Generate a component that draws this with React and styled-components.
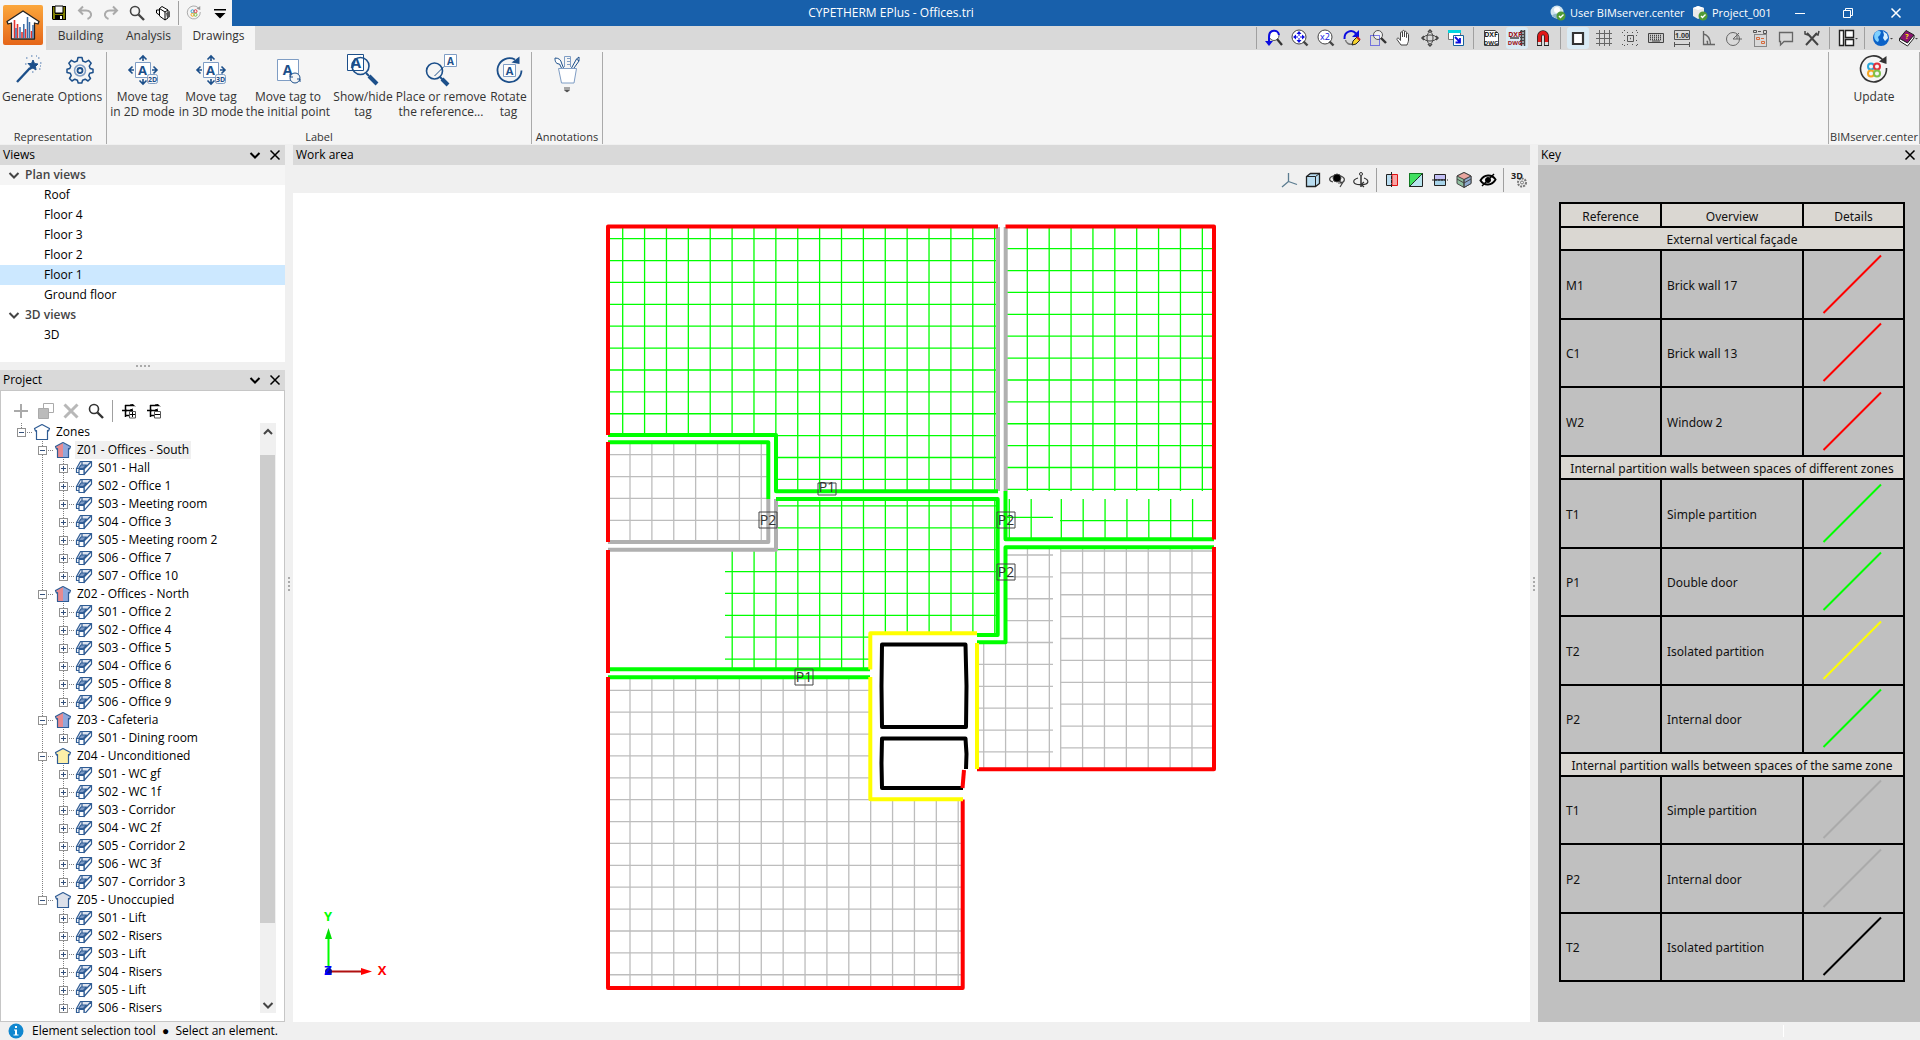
import React from 'react'
import styled, { createGlobalStyle } from 'styled-components'

const GlobalStyle = createGlobalStyle`
  * { box-sizing: border-box; }
  body {
    margin: 0;
    font-family: "Open Sans", "Noto Sans", sans-serif;
    font-size: 12px;
    line-height: 16px;
    color: #000;
    background: #f0f0f0;
  }
  button { font: inherit; color: inherit; }
  svg { display: block; flex: none; overflow: visible; }
  ul { list-style: none; margin: 0; padding: 0; }
`

/* ---------- layout ---------- */

const Page = styled.div`
  display: flex;
  flex-direction: column;
  height: 100vh;
  overflow: hidden;
`
const TopArea = styled.header`
  display: grid;
  grid-template-columns: 46px 1fr;
  flex: none;
`
const LogoBox = styled.div`
  display: flex;
  align-items: center;
  justify-content: center;
  background: #f5f5f5;
`
const TitleBar = styled.div`
  display: flex;
  height: 26px;
  background: #1860ab;
  color: #fff;
`
const QuickAccess = styled.div`
  display: flex;
  align-items: center;
  gap: 4px;
  width: 186px;
  padding-left: 2px;
  background: #f5f5f5;
`
const Title = styled.h1`
  flex: 1;
  margin: 0;
  text-align: center;
  font-size: 12px;
  font-weight: 400;
  line-height: 26px;
`
const Account = styled.div`
  display: flex;
  align-items: center;
  gap: 4px;
  width: 226px;
  font-size: 11px;
  white-space: nowrap;
`
const AccountLink = styled.a`
  display: flex;
  align-items: center;
  gap: 4px;
  width: ${p => p.$w}px;
  color: #fff;
  text-decoration: none;
`
const WindowButton = styled.button`
  display: flex;
  align-items: center;
  justify-content: center;
  width: 48px;
  border: none;
  padding: 0;
  background: none;
`
const TabRow = styled.div`
  display: flex;
  justify-content: space-between;
  height: 24px;
  background: #d9d9d9;
`
const Tabs = styled.nav`
  display: flex;
`
const Tab = styled.button`
  width: ${p => p.$w}px;
  border: none;
  padding: 0 0 4px;
  color: #333;
  background: ${p => (p.$active ? '#f5f5f5' : 'transparent')};
`
const Tools = styled.div`
  display: flex;
  align-items: center;
  gap: 4px;
  padding-right: 1px;
`
const IconButton = styled.button`
  display: flex;
  align-items: center;
  justify-content: center;
  width: 22px;
  height: 22px;
  padding: 0;
  border: none;
  border-radius: 3px;
  background: ${p => (p.$active ? '#d9ebf5' : 'transparent')};
`
const Divider = styled.span`
  align-self: stretch;
  width: 1px;
  margin: 1px ${p => p.$gap || 0}px;
  background: #a0a0a0;
`

/* ---------- ribbon ---------- */

const Ribbon = styled.div`
  display: flex;
  flex: none;
  height: 94px;
  padding-top: 2px;
  background: #f5f5f5;
  color: #333;
`
const Group = styled.section`
  display: flex;
  flex-direction: column;
  justify-content: space-between;
  padding: 0 1px;
  border-right: 1px solid #aaa;
  ${p => p.$last && 'margin-left: auto; border-left: 1px solid #aaa;'}
`
const GroupButtons = styled.div`
  display: flex;
  justify-content: center;
`
const GroupName = styled.div`
  text-align: center;
  font-size: 11px;
  line-height: 14px;
`
const BigButton = styled.button`
  display: flex;
  flex-direction: column;
  align-items: center;
  justify-content: flex-start;
  gap: 3px;
  width: ${p => p.$w}px;
  padding: 2px 0 0;
  border: none;
  background: none;
  line-height: 15px;
  white-space: nowrap;
`

/* ---------- panels ---------- */

const Main = styled.main`
  display: flex;
  flex: 1;
  min-height: 0;
  padding-top: 1px;
`
const LeftColumn = styled.aside`
  display: flex;
  flex-direction: column;
  width: 285px;
`
const PanelHead = styled.div`
  display: flex;
  align-items: center;
  flex: none;
  height: 20px;
  padding-left: 3px;
  background: #d9d9d9;
`
const PanelTitle = styled.h2`
  flex: 1;
  margin: 0;
  font-size: 12px;
  font-weight: 400;
`
const HeadButton = styled.button`
  display: flex;
  justify-content: center;
  width: 20px;
  padding: 0;
  border: none;
  background: none;
`
const ViewList = styled.ul`
  flex: none;
  height: 197px;
  background: #fff;
`
const ViewRow = styled.li`
  display: flex;
  align-items: center;
  gap: 5px;
  height: 20px;
  padding-left: ${p => (p.$group ? 8 : 44)}px;
  font-weight: ${p => (p.$group ? 600 : 400)};
  color: ${p => (p.$group ? '#444' : '#000')};
  background: ${p => (p.$selected ? '#cce8ff' : p.$tint ? '#f5f5f5' : 'transparent')};
`
const SplitBar = styled.div`
  display: flex;
  flex-direction: ${p => (p.$vertical ? 'column' : 'row')};
  align-items: center;
  justify-content: center;
  gap: 2px;
  flex: none;
  ${p => (p.$vertical ? 'width' : 'height')}: 8px;
`
const Dot = styled.i`
  width: 2px;
  height: 2px;
  background: #aaa;
`
const ProjectBody = styled.div`
  display: flex;
  flex-direction: column;
  flex: 1;
  min-height: 0;
  padding: 8px 8px 8px 0;
  border: 1px solid #c6c6c6;
  background: #fff;
`
const ProjectTools = styled.div`
  display: flex;
  align-items: center;
  gap: 3px;
  height: 24px;
  flex: none;
  padding-left: 9px;
`
const TreeArea = styled.div`
  display: flex;
  flex: 1;
  min-height: 0;
`
const Tree = styled.ul`
  flex: 1;
  overflow: hidden;
`
const TreeRow = styled.li`
  display: flex;
  align-items: center;
  height: 18px;
  padding-left: 16px;
`
const dotted = 'repeating-linear-gradient(#808080 0 1px, transparent 1px 2px)'
const Guide = styled.span`
  flex: none;
  width: 21px;
  height: 18px;
  background: ${p => (p.$on ? dotted + ' 4px 0 / 1px 100% no-repeat' : 'none')};
`
const ExpandCell = styled.span`
  display: flex;
  align-items: center;
  width: 9px;
  height: 18px;
  background: ${dotted} 4px 0 / 1px ${p => (p.$end ? '50%' : '100%')} no-repeat;
`
const Expander = styled.button`
  width: 9px;
  height: 9px;
  padding: 0;
  border: 1px solid #919191;
  background: #fff;
`
const Stub = styled.span`
  width: 7px;
  height: 1px;
  margin-right: 1px;
  background: repeating-linear-gradient(90deg, transparent 0 1px, #808080 1px 2px);
`
const TreeLabel = styled.span`
  margin-left: 4px;
  padding: 0 2px;
  line-height: 18px;
  background: ${p => (p.$selected ? '#f0f0f0' : 'transparent')};
`
const Scrollbar = styled.div`
  display: flex;
  flex-direction: column;
  justify-content: space-between;
  width: 16px;
  background: #f0f0f0;
`
const ScrollThumb = styled.div`
  height: 468px;
  margin-bottom: auto;
  margin-right: 1px;
  background: #cdcdcd;
`
const ScrollButton = styled.button`
  display: flex;
  align-items: center;
  justify-content: center;
  height: ${p => (p.$tall ? 32 : 16)}px;
  padding: 0 0 ${p => (p.$tall ? 14 : 0)}px;
  border: none;
  background: none;
`
const WorkArea = styled.section`
  display: flex;
  flex-direction: column;
  flex: 1;
  min-width: 0;
`
const WorkTools = styled.div`
  display: flex;
  align-items: center;
  justify-content: flex-end;
  gap: 2px;
  flex: none;
  height: 28px;
  padding-top: 2px;
`
const Canvas = styled.div`
  flex: 1;
  min-height: 0;
  background: #fff;
  svg { width: 100%; height: 100%; }
`
const KeyPanel = styled.aside`
  display: flex;
  flex-direction: column;
  width: 382px;
  background: #c0c0c0;
`
const KeyBody = styled.div`
  padding: 37px 15px 0 21px;
`
const KeyTable = styled.table`
  width: 100%;
  table-layout: fixed;
  border-collapse: collapse;
  font-family: "Noto Sans", sans-serif;
  font-size: 12px;
  line-height: 18px;
  color: #111;
  th, td {
    border: 2px solid #000;
    padding: 2px 5px 0;
    font-weight: 400;
    text-align: left;
  }
  thead th, th[colspan] {
    padding: 3px 0 0;
    background: #dad7d2;
    text-align: center;
    white-space: nowrap;
  }
  thead tr { height: 24px; }
  tbody tr:nth-child(even) { height: 69px; }
  tbody tr:nth-child(odd) { height: 68px; }
  td svg { margin: 0 auto; }
  td:last-child { padding: 0 4px 2px 0; }
`
const KeySection = styled.tr`
  &&& { height: 23px; }
`
const StatusBar = styled.footer`
  display: flex;
  align-items: center;
  gap: 8px;
  flex: none;
  height: 18px;
  padding: 0 136px 0 8px;
`
const StatusMark = styled.i`
  width: 1px;
  height: 12px;
  margin-left: auto;
  background: #fff;
`

/* ---------- icons ---------- */

const NAVY = '#1c4f8a'
const LIGHT = '#7f9dc4'

const Svg = ({ s = 18, w, h, children, ...rest }) => (
  <svg width={w || s} height={h || s} viewBox={`0 0 ${w || s} ${h || s}`} fill="none" stroke="#333" {...rest}>
    {children}
  </svg>
)
const letter = { stroke: 'none', fontFamily: 'Open Sans', fontWeight: 700, textAnchor: 'middle' }

const Logo = () => (
  <svg width="40" height="40" viewBox="0 0 40 40">
    <defs>
      <linearGradient id="orange" x1="0" y1="0" x2="0" y2="1">
        <stop offset="0" stopColor="#fba73c" />
        <stop offset="1" stopColor="#e5661a" />
      </linearGradient>
    </defs>
    <rect width="40" height="40" rx="2" fill="url(#orange)" />
    <path d="M20 6L36 16.500L35 19L31.500 18V34H8.500V18L5 19L4 16.500Z" fill="#fff" stroke="#222" strokeWidth="1.300" strokeLinejoin="round" />
    <path d="M11.500 15V33M14.500 19V33M19 27V33M22.500 24V33M28.500 26V33" stroke="#e3342f" strokeWidth="1.600" />
    <path d="M17 22V33M20.800 19V33M24.500 12V33M26.500 17V33M13 23V33M30 20V33" stroke="#3c6ea8" strokeWidth="1.500" />
  </svg>
)

const Save = () => (
  <Svg s={16} stroke="none">
    <path d="M1 1H15V15H2L1 14Z" fill="#000" />
    <path d="M2 2H4V9H12V2H14V14H2Z" fill="#808000" />
    <path d="M4 1H12V8H4Z" fill="#f5f5f5" stroke="#000" />
    <path d="M4 10H12V15H4Z" fill="#000" />
    <path d="M9 11H11V14H9Z" fill="#fff" />
  </Svg>
)
const Undo = ({ flip }) => (
  <Svg s={16} stroke="#aaa" strokeWidth="2" transform={flip ? 'scale(-1 1)' : undefined}>
    <path d="M6 1.500L2 5.500L6 9.500M2.500 5.500H9C13 5.500 14.500 8 14 10.500C13.500 12.500 12 13.500 10.500 14" />
  </Svg>
)
const Search = ({ c = '#444' }) => (
  <Svg s={16} stroke={c}>
    <circle cx="6" cy="6" r="4.500" strokeWidth="1.600" />
    <path d="M9.500 9.500L15 15" strokeWidth="2.400" />
  </Svg>
)
const Teapot = () => (
  <Svg s={16} stroke="#000">
    <path d="M4.500 3.500L7 1.500L13 5V13L10 15L4.500 11Z" fill="#fff" />
    <path d="M4.500 3.500L10 7L13 5M10 7V15M4.500 5H1.500V8L4.500 10" />
    <path d="M11 8L15 6V12L12 13Z" fill="#555" stroke="none" />
  </Svg>
)
const Bim = ({ s = 16, dark = '#999' }) => (
  <svg width={s} height={s} viewBox="0 0 32 32" fill="none">
    <path d="M25 6A13 13 0 1 0 28.500 14" stroke={dark} strokeWidth="1.600" />
    <path d="M28.500 2V10L21 7.500Z" fill={dark} />
    <g strokeWidth="2">
      <circle cx="13" cy="12.500" r="3" stroke="#29a8dc" />
      <circle cx="19" cy="12.500" r="3" stroke="#e0303c" />
      <circle cx="13" cy="19.500" r="3" stroke="#f5a623" />
      <circle cx="19" cy="19.500" r="3" stroke="#7cc04b" />
    </g>
  </svg>
)
const MoreArrow = () => (
  <Svg s={14} stroke="none" fill="#000">
    <path d="M1 3H13V4.500H1ZM1.500 7H12.500L7 12.500Z" />
  </Svg>
)
const UserIcon = ({ cube }) => (
  <Svg s={16} stroke="none">
    {cube ? <path d="M6 1L12 3V11L6 14L1 11V3Z" fill="#e9e9e9" />
      : <g><circle cx="7" cy="7" r="6.500" fill="#cfe4ee" /><circle cx="7" cy="5" r="3" fill="#fff" /><path d="M2 11C3 8 11 8 12 11L7 14Z" fill="#8fb7c9" /></g>}
    {cube && <path d="M1 3L6 5L12 3L6 1Z" fill="#fff" />}
    <circle cx="11" cy="11" r="4.500" fill="#4f9a35" />
    <path d="M9 11L10.500 12.500L13.500 9.500" stroke="#fff" strokeWidth="1.400" />
  </Svg>
)
const Chevron = ({ c = '#000', up }) => (
  <Svg w={12} h={12} stroke={c} strokeWidth="2">
    <path d={up ? 'M2 8L6 4L10 8' : 'M1.500 4L6 8.500L10.500 4'} />
  </Svg>
)
const Cross = ({ c = '#000' }) => (
  <Svg s={12} stroke={c} strokeWidth="1.500"><path d="M1.500 1.500L10.500 10.500M10.500 1.500L1.500 10.500" /></Svg>
)

const Lens = ({ children }) => (
  <Svg s={18}>
    <circle cx="8" cy="8" r="7" fill="#fff" stroke="#444" />
    <path d="M12.500 12.500L16.500 16.500" stroke="#444" strokeWidth="2.400" />
    {children}
  </Svg>
)
const BLUE = '#0c0ce0'
const ZoomPrev = () => (
  <Svg s={18}>
    <circle cx="9" cy="6.500" r="5" fill="#fff" stroke="#555" />
    <path d="M12 10L17 16" strokeWidth="2.200" />
    <path d="M14 6C13 0 4 0 4 8V13" stroke={BLUE} strokeWidth="2" />
    <path d="M0 12H8L4 17Z" fill={BLUE} stroke="none" />
  </Svg>
)
const ZoomAll = () => (
  <Lens>
    <path d="M8 3V13M3 8H13" stroke={BLUE} strokeDasharray="4 2" />
    <path d="M5.500 5L8 2L10.500 5ZM5.500 11L8 14L10.500 11ZM5 5.500L2 8L5 10.500ZM11 5.500L14 8L11 10.500Z" fill={BLUE} stroke="none" />
  </Lens>
)
const ZoomTwo = () => <Lens><text x="8" y="11" {...letter} fontWeight="400" fontSize="9" fill={BLUE}>x2</text></Lens>
const Redraw = () => (
  <Svg s={18}>
    <path d="M2.500 11C3 14 6 16 10 15" stroke="#777" strokeWidth="1.500" />
    <path d="M1.500 10C1 2 9 0 13 4.500" stroke={BLUE} strokeWidth="2" />
    <path d="M16 1V8H9Z" fill={BLUE} stroke="none" />
    <path d="M9 16L10 12L14 8L17 11L13 15Z" fill="#f6d32d" stroke="#222" />
    <path d="M14 8L17 11" stroke="#c01c28" strokeWidth="2" />
  </Svg>
)
const ZoomWindow = () => (
  <Svg s={18}>
    <circle cx="9" cy="6" r="4.500" fill="#f0f0f0" stroke="#555" />
    <path d="M12 9L17 14" strokeWidth="2.400" />
    <path d="M1.500 6.500H10.500V16.500H1.500Z" stroke={BLUE} strokeDasharray="1 1" />
  </Svg>
)
const Hand = () => (
  <Svg s={18} stroke="#444">
    <path d="M6 16L2 10.500C1.500 9 3.500 8.500 4.500 10L5.500 11.500V4C5.500 2.500 7.500 2.500 7.500 4V8V2.500C7.500 1 9.500 1 9.500 2.500V8V3C9.500 2 11.500 2 11.500 3.500V8.500V5C11.500 4 13.500 4 13.500 5.500V11C13.500 13 12.500 14 12 16Z" fill="#fff" />
  </Svg>
)
const Orbit = () => (
  <Svg s={18} stroke="#444">
    <ellipse cx="9" cy="9" rx="3" ry="6" /><ellipse cx="9" cy="9" rx="6.500" ry="3" />
    <path d="M7 3L9 1L11 3M7 15L9 17L11 15M3 7L1 9L3 11M15 7L17 9L15 11" strokeWidth="1.500" />
  </Svg>
)
const WindowPair = () => (
  <Svg s={18}>
    <path d="M1.500 1.500H13.500V10.500H1.500Z" fill="#fff" stroke="#777" />
    <path d="M1 1H14V4H1Z" fill="#00d5e0" stroke="none" />
    <path d="M6.500 6.500H16.500V16.500H6.500Z" fill="#fff" stroke="#16609c" />
    <path d="M8 8L13 13M13 9V13.500H8.500" stroke={BLUE} strokeWidth="1.800" />
  </Svg>
)
const Dxf = ({ red }) => (
  <Svg s={18}>
    {!red && <path d="M2.500 1.500H13L16.500 4.500V16.500H2.500Z" fill="#fff" stroke="#444" />}
    {red && <path d="M12 2.500H17M12 5.500H17M12 8.500H17M12 11.500H17M12 14.500H17M13.500 1V17M16.500 1V17M2 9H11" stroke="#444" strokeWidth="1.500" />}
    <text x={red ? 7 : 9} y="8" {...letter} fontSize="7" fill={red ? '#9c0f14' : '#222'}>DXF</text>
    <text x={red ? 7 : 9} y="16" {...letter} fontSize="6" fill={red ? '#9c0f14' : '#222'}>DWG</text>
  </Svg>
)
const Magnet = () => (
  <Svg s={18}>
    <path d="M5.500 17V7.500C5.500 2.500 12.500 2.500 12.500 7.500V17" stroke="#222" strokeWidth="5" />
    <path d="M5.500 13V7.500C5.500 2.500 12.500 2.500 12.500 7.500V13" stroke="#e01818" strokeWidth="3.400" />
    <path d="M5.500 13V16M12.500 13V16" stroke="#ddd" strokeWidth="3.400" />
  </Svg>
)
const BoxTool = () => <Svg s={18}><path d="M4 4H14V15H4Z" stroke="#333" strokeWidth="2.200" fill="#fff" /></Svg>
const GridTool = () => <Svg s={18} stroke="#666"><path d="M4.500 1V17M9.500 1V17M14.500 1V17M1 4.500H17M1 9.500H17M1 14.500H17" /></Svg>
const SnapTool = () => (
  <Svg s={18} stroke="#555">
    <path d="M6.500 6.500H12.500V12.500H6.500Z" /><path d="M9 9.500H10" strokeWidth="1.500" />
    <path d="M3.500 1V18M15.500 1V18" strokeDasharray="1 4" /><path d="M1 3.500H18M1 15.500H18" strokeDasharray="1 4" />
  </Svg>
)
const Keyboard = () => (
  <Svg s={18} stroke="#444">
    <path d="M1.500 4.500H16.500V13.500H1.500Z" fill="#ccc" />
    <path d="M3 6.500H15M3 8.500H15M3 10.500H15" strokeDasharray="1 1" strokeWidth="1.500" /><path d="M5 12H13" />
  </Svg>
)
const Dimension = () => (
  <Svg s={18} stroke="#555">
    <path d="M1.500 1.500H16.500V10.500H1.500ZM1.500 13V18M16.500 13V18M1.500 15.500H16.500" />
    <text x="9" y="9" {...letter} fontSize="7" fill="#333">1.00</text>
  </Svg>
)
const Angle = () => <Svg s={18} stroke="#666"><path d="M4.500 2V15.500H16M4.500 5C9 6 11 9 11.500 15M7.500 12.500H8.500V15" strokeWidth="1.300" /></Svg>
const Polar = () => <Svg s={18} stroke="#666"><circle cx="8" cy="10" r="6.500" /><path d="M8 10L14 4M8 10H17M12 5V10" /></Svg>
const Select = () => (
  <Svg s={18} stroke="#333">
    <path d="M3.500 5.500H15.500V17.500H3.500Z" strokeDasharray="1 1" />
    <path d="M2.500 1.500H5.500V3.500H2.500ZM12.500 1.500H15.500V4.500H12.500ZM7 2.500H10" stroke="#555" />
    <path d="M5.500 8.500H8.500V10.500H5.500ZM10.500 12.500H13.500V14.500H10.500ZM10 9.500H13" stroke="#d86a3a" />
  </Svg>
)
const Bubble = () => <Svg s={18} stroke="#666"><path d="M2.500 3.500H15.500V12.500H7L3.500 16V12.500H2.500Z" strokeWidth="1.300" /></Svg>
const Tools2 = () => (
  <Svg s={18} stroke="#444" strokeWidth="2">
    <path d="M4 4L15 16M14 4L3 16" /><path d="M2 2V5L5 6M16 2L15 6L12 5" strokeWidth="1.500" />
  </Svg>
)
const Panes = () => (
  <Svg s={18} stroke="#222">
    <path d="M1.500 1.500H5.500V16.500H1.500ZM7.500 1.500H15.500V8.500H7.500ZM7.500 10.500H15.500V16.500H7.500Z" fill="#fff" strokeWidth="1.400" />
    <path d="M17 9H20L18.500 10.500Z" fill="#444" stroke="none" />
  </Svg>
)
const Globe = () => (
  <Svg s={18} stroke="none">
    <circle cx="8" cy="9" r="8" fill="#0b62c8" />
    <path d="M2 4C4 1 7 2 8 3L7 6L5 8L6 11L5 13C2 12 0 8 2 4Z" fill="#7fd0ff" />
    <path d="M10 2L14 5L15 9L12 12L10 9L11 6Z" fill="#d8f0ff" />
    <path d="M17 9H20L18.500 10.500Z" fill="#444" />
  </Svg>
)
const Book = () => (
  <Svg s={18} stroke="#222">
    <path d="M.5 9.500L7 1.500L15 6L8.500 14Z" fill="#8b1670" />
    <path d="M.5 9.500V12L8.500 17L15 9V6L8.500 14Z" fill="#fff" />
    <text x="8" y="10" {...letter} fontSize="7" fill="#ffe600">?</text>
    <path d="M16 9H19L17.500 10.500Z" fill="#444" stroke="none" />
  </Svg>
)

/* ribbon drawings, 32px */
const Wand = () => (
  <Svg s={32} stroke={NAVY}>
    <path d="M5 28L18 14" strokeWidth="2.400" />
    <path d="M21 6L22.500 9.500L26 10L23.500 12.500L24 16L21 14L17.500 15.500L18.500 12L16 9.500L19.500 9.500Z" fill={NAVY} />
    <path d="M14 4H15.500M19 2H20.500M26 4H27.500M28 9H29.500M27 15H28.500M13 10H14.500M20 18H21.500M24 2H25M28 12H29" strokeWidth="1.500" stroke={LIGHT} />
  </Svg>
)
const Gear = () => (
  <Svg s={32} stroke={NAVY} strokeWidth="1.500" strokeLinejoin="round">
    <path d="M14 3.500H18L18.800 7L21.500 8.100L24.600 6.300L27.200 9.200L25.300 12.200L26.200 14.500L29 15.200V18.500L25.700 19.300L24.800 21.600L26.500 24.500L24 27L21.200 25.200L18.600 26.200L17.800 29H14.200L13.400 26.200L10.800 25.200L8 27L5.500 24.500L7.200 21.600L6.300 19.300L3 18.500V15.200L5.800 14.500L6.700 12.200L4.800 9.200L7.400 6.300L10.500 8.100L13.200 7Z" />
    <circle cx="16" cy="16.500" r="5.500" stroke={LIGHT} /><circle cx="16" cy="16.500" r="2.500" strokeWidth="1.800" />
  </Svg>
)
const MoveTag = ({ mode }) => (
  <Svg s={32} stroke={NAVY} strokeWidth="1.600">
    <path d="M8.500 8.500H23.500V23.500H8.500Z" fill="#fff" stroke={LIGHT} strokeWidth="1" />
    <path d="M16 7V3M12.500 5.500L16 2L19.500 5.500M16 25V29M12.500 26.500L16 30L19.500 26.500M7 16H3M5.500 12.500L2 16L5.500 19.500M25 16H29M26.500 12.500L30 16L26.500 19.500" />
    <text x="15.500" y="21" {...letter} fontSize="13" fill={NAVY}>A</text>
    <rect x="20.500" y="20.500" width="10" height="9" rx="2" fill="#f5f5f5" stroke={LIGHT} strokeWidth="1" />
    <text x="25.500" y="28" {...letter} fontSize="7" fill={NAVY}>{mode}</text>
  </Svg>
)
const TagStart = () => (
  <Svg s={32} stroke={NAVY}>
    <path d="M5.500 5.500H26.500V26.500H5.500Z" fill="#fff" stroke={LIGHT} />
    <text x="15.500" y="21" {...letter} fontSize="14" fill={NAVY}>A</text>
    <circle cx="23" cy="24" r="5" fill="#f5f5f5" />
    <path d="M18 20V23H21M28 28V25H25" />
  </Svg>
)
const ShowTag = () => (
  <Svg s={32} stroke={NAVY}>
    <path d="M.5 .5H16.500V16.500H.5Z" fill="#fff" />
    <text x="9" y="14" {...letter} fontSize="15" fill={NAVY}>A</text>
    <circle cx="13.500" cy="12" r="8.500" strokeWidth="1.600" />
    <path d="M19 19L22 22" strokeWidth="2" /><path d="M22 22L30 30" strokeWidth="4" />
  </Svg>
)
const PlaceTag = () => (
  <Svg s={32} stroke={NAVY}>
    <path d="M19.500 .5H31.500V12.500H19.500Z" fill="#fff" stroke={LIGHT} />
    <text x="25.500" y="10.500" {...letter} fontSize="10" fill={NAVY}>A</text>
    <circle cx="9.500" cy="17" r="8" strokeWidth="1.600" />
    <path d="M9.500 22L19 12.500" /><path d="M15 23L17.500 25.500" strokeWidth="2" /><path d="M17 25L23 31" strokeWidth="4" />
  </Svg>
)
const RotateTag = () => (
  <Svg s={32} stroke={NAVY} strokeWidth="1.800">
    <path d="M22 5.500A12 12 0 1 0 28.500 16.500" />
    <path d="M26.500 2.500V10L18.500 8.500Z" fill={NAVY} stroke="none" />
    <path d="M10.500 10.500H22.500V22.500H10.500Z" fill="#fff" stroke={LIGHT} strokeWidth="1" />
    <text x="16.500" y="20.500" {...letter} fontSize="11" fill={NAVY}>A</text>
  </Svg>
)
const PenCup = () => (
  <Svg w={32} h={38} stroke={LIGHT}>
    <path d="M13.500 13V2.500H19.500V13M16 4.500H19M16 7.500H19M16 10.500H19" />
    <path d="M10.500 14L8.500 10C4 10 4 6 4 4C8 4 10 6 10.500 9L12.500 14" fill="#fff" stroke={NAVY} />
    <path d="M20.500 14L25.500 5L28 7L23 14M25.500 5L28 3V7" stroke={NAVY} />
    <path d="M7.500 14.500H25.500L23 29H10.500Z" fill="#fff" />
    <path d="M13 34H19M13.500 36H18.500L16 38Z" fill="#555" stroke="#555" />
  </Svg>
)

/* project panel */
const Plus = () => <Svg s={16} stroke="#aaa" strokeWidth="2"><path d="M8 1V15M1 8H15" /></Svg>
const Copies = () => <Svg s={18} stroke="#aaa"><path d="M6.500 1.500H16.500V10.500H6.500Z" fill="#fff" /><path d="M1.500 6.500H11.500V16.500H1.500Z" fill="#bbb" /></Svg>
const Remove = () => <Svg s={16} stroke="#b8b8b8" strokeWidth="3"><path d="M1.500 1.500L14.500 14.500M14.500 1.500L1.500 14.500" /></Svg>
const TreeTool = ({ plus }) => (
  <Svg s={16} stroke="#000">
    <path d="M1 7.500H6M4.500 2V14" strokeWidth="1.500" /><path d="M4 2.500H13M5 7.500H12M5 12.500H9" strokeWidth="1.500" />
    <path d="M9 2L12 1.500L14 3.500M9 7L12 6" />
    <path d="M8.500 8.500H14.500V15H8.500Z" fill="#fff" stroke="#555" />
    <path d={plus ? 'M9 11.500H14M11.500 9V14' : 'M9 11.500H14'} />
  </Svg>
)
const fills = { none: ['#fff', '#fff'], heat: ['#e88a8f', '#8fa8dc'], yellow: ['#fdf0a8', '#fdf0a8'], grey: ['#dde1ea', '#dde1ea'] }
const House = ({ kind }) => (
  <Svg s={16} stroke="none">
    <path d="M0 5L8 1V15.500H2.500V6Z" fill={fills[kind][0]} /><path d="M8 1L16 5L13.500 6V15.500H8Z" fill={fills[kind][1]} />
    <path d="M8 .5L15.500 4.500L14.500 7L13.500 6.500V15.500H2.500V6.500L1.500 7L.5 4.500Z" stroke="#2f5c94" strokeWidth="1.200" strokeLinejoin="round" />
  </Svg>
)
const Space = () => (
  <Svg s={16} stroke="#2f5c94" strokeWidth="1.200" strokeLinejoin="round">
    <path d="M4.500 1.500H15.500L9 8.500H.5Z" fill="#dfe5f0" />
    <path d="M15.500 1.500V6L8 14.500V9L15.500 1.500" fill="#fff" />
    <path d="M5 5H10.500L7.500 8.500H2.500Z" fill="#7f9bc4" /><path d="M6 2V5" />
    <path d="M.5 8.500V12.500H3" /><path d="M3 9.500H8V14.500H3Z" fill="#fff" />
  </Svg>
)

/* work area toolbar */
const Axes = () => <Svg s={18} stroke="#5b7c90" strokeWidth="1.300"><path d="M8.500 2V10.500L2 16M8.500 10.500L17 13.500" /></Svg>
const Cube = () => (
  <Svg s={18} stroke="#222">
    <path d="M2.500 5.500L6.500 2.500H15.500V12.500L11.500 15.500H2.500Z" fill="#b8dcf0" strokeWidth="1.300" /><path d="M2.500 5.500H11.500V15.500M11.500 5.500L15.500 2.500" />
  </Svg>
)
const EyeSpin = () => (
  <Svg s={18} stroke="#444">
    <path d="M5 5C0 7 1 10 5 11M13 5C18 7 17 11 13 12L10 12M10 9.500L14.500 12L12 16" strokeWidth="1.200" />
    <circle cx="9" cy="7" r="4" fill="#000" />
  </Svg>
)
const AxisSpin = () => (
  <Svg s={18} stroke="#333"><circle cx="9" cy="3" r="1.500" /><path d="M9 5V16" strokeWidth="1.500" /><path d="M6 7C-1 9 1 14 9 13.500C17 14 18 9 12 7M12 11L9 13.500L12 16" strokeWidth="1.200" /></Svg>
)
const Half = ({ kind }) => (
  <Svg s={18} stroke="#222">
    {kind === 'red' && <g><path d="M3.500 3.500H9V14.500H3.500Z" fill="#b8dcf0" /><path d="M9 3.500H14.500V14.500H9Z" fill="#f9a3a3" stroke="#e01010" /><path d="M8.500 1V17" strokeDasharray="3 1" /></g>}
    {kind === 'green' && <g><path d="M2.500 2.500H15.500V15.500H2.500Z" fill="#b8e4ee" /><path d="M2.500 2.500H15.500L2.500 15.500Z" fill="#40e060" stroke="#117a22" /><path d="M2.500 15.500L15.500 2.500" strokeDasharray="3 1" /></g>}
    {kind === 'blue' && <g><path d="M3.500 3.500H14.500V9H3.500Z" fill="#c3bff5" /><path d="M3.500 9H14.500V14.500H3.500Z" fill="#a8d4ea" /><path d="M1 9H17" strokeDasharray="2 1" /></g>}
  </Svg>
)
const Layers = () => (
  <Svg s={18} stroke="#444">
    <path d="M9 1.500L16 5V12.500L9 16.500L2 12.500V5Z" fill="#8fc0a0" />
    <path d="M9 8.500L16 5V12.500L9 16.500Z" fill="#8ea9cf" />
    <path d="M9 1.500L16 5L9 8.500L2 5Z" fill="#e9a6a0" /><path d="M2 8L9 12L16 8M9 8.500V16" />
  </Svg>
)
const EyeOff = () => (
  <Svg s={18} stroke="#000"><path d="M1.500 9.500C5 3 13 3 16.500 8.500C13 15 5 15 1.500 9.500Z" strokeWidth="2" /><circle cx="9" cy="9" r="2.500" fill="#000" /><path d="M3 15L15 3" strokeWidth="1.500" /></Svg>
)
const Gear3d = () => (
  <Svg s={18} stroke="#777">
    <circle cx="12" cy="11.500" r="4" strokeWidth="2" strokeDasharray="2 1" /><circle cx="12" cy="11.500" r="1.500" />
    <text x="7" y="8" {...letter} fontSize="9" fill="#222">3D</text>
  </Svg>
)
const Info = () => (
  <Svg s={16} stroke="none"><circle cx="8" cy="8" r="7.500" fill="#1187cf" /><path d="M7 3H9V5H7ZM6 6.500H9V11.500H10.500V12.500H5.500V11.500H7V7.500H6Z" fill="#fff" /></Svg>
)

/* ---------- floor plan ---------- */

const STEP = 21.88
const grids = [
  { id: 'g1', c: '#00ff00', x: 622.7, y: 238.7, area: '609,228 997,228 997,491 776,491 776,435 609,435' },
  { id: 'g2', c: '#00ff00', x: 732.2, y: 505.9, area: '776,500 997,500 997,633 870,633 870,669 725,669 725,551 776,551' },
  { id: 'g3', c: '#00ff00', x: 1027.3, y: 248.7, area: '1007,228 1213,228 1213,491 1007,491' },
  { id: 'g4', c: '#00ff00', x: 1009.3, y: 517.3, area: '1007,499 1053,499 1053,518 1040,518 1040,538 1007,538' },
  { id: 'g5', c: '#00ff00', x: 1061.3, y: 520.7, area: '1060,499 1213,499 1213,538 1060,538' },
  { id: 'g6', c: '#bdbdbd', x: 630, y: 454.7, area: '609,444 767,444 767,541 609,541' },
  { id: 'g7', c: '#bdbdbd', x: 630, y: 690.3, area: '609,679 870,679 870,798 962,798 962,987 609,987' },
  { id: 'g8', c: '#bdbdbd', x: 983.7, y: 555, area: '1007,549 1053,549 1053,768 979,768 979,644 1007,644' },
  { id: 'g9', c: '#bdbdbd', x: 1060.7, y: 551, area: '1060,549 1213,549 1213,768 1060,768' },
]
const walls = [
  ['#b0b0b0', 'M998 227V491M1005.700 227V491M768.300 499V542H608M776 499V549.700H608'],
  ['#00ff00', 'M608 435H776V491.300H998M608 442.300H768.300V499M776 499H997.700V635H977M1005.500 491V539.300H1214M1214 547.300H1005.500V642.300H977M608 669.300H870M608 677.300H870'],
  ['#ff0000', 'M608 435V226.500H998M1005.500 226.500H1214V539.500M608 442V542M608 550V673M608 677V988H962.700V799.500M1214 547V769.300H977'],
  ['#ffff00', 'M870.300 669.500V633.300H977M977 643V769M870.300 677V799.300H963'],
  ['#000000', 'M882 644.500H965.500L966.500 686L966 727H882L881.500 686ZM963 788H882L881.500 763L882 738.500H965.500L966.500 754L966 769'],
  ['#ff0000', 'M964 770L962.500 788'],
]
const tags = [['P1', 818, 483, 12], ['P2', 759, 512, 16], ['P2', 997, 512, 16], ['P2', 997, 564, 16], ['P1', 795, 669, 16]]
const range = (from, to) => {
  const out = []
  for (let v = from; v < to; v += STEP) out.push(v)
  return out
}

function FloorPlan() {
  return (
    <svg viewBox="293 193 1237 829" fill="none" fontFamily="Open Sans">
      {grids.map(g => {
        const pts = g.area.split(' ').map(p => p.split(',').map(Number))
        const maxX = Math.max(...pts.map(p => p[0]))
        const maxY = Math.max(...pts.map(p => p[1]))
        return (
          <g key={g.id} clipPath={`url(#${g.id})`} stroke={g.c} strokeWidth="1.3">
            <clipPath id={g.id}><polygon points={g.area} /></clipPath>
            {range(g.x, maxX).map(x => <path key={x} d={`M${x} 200V${maxY}`} />)}
            {range(g.y, maxY).map(y => <path key={y} d={`M600 ${y}H${maxX}`} />)}
          </g>
        )
      })}
      {walls.map(([c, d], i) => <path key={i} d={d} stroke={c} strokeWidth="4" strokeLinejoin="round" />)}
      {tags.map(([name, x, y, h], i) => (
        <g key={i}>
          <path d={`M${x} ${y}h18v${h}h-18z`} stroke="#444" strokeWidth="1" />
          <text x={x + 9} y={y + h - 3} fontSize="14" textAnchor="middle" fill="#333">{name}</text>
        </g>
      ))}
      <path d="M328.500 971V936" stroke="#00ff00" strokeWidth="2" />
      <path d="M328.500 928L332 939H325Z" fill="#00e000" />
      <path d="M329 971.500H362" stroke="#b01010" strokeWidth="2" />
      <path d="M372 971.500L361 968V975Z" fill="#ff0000" />
      <circle cx="328.500" cy="971.500" r="3.500" fill="#0a0a90" />
      <g fontSize="13" fontWeight="700" textAnchor="middle">
        <text x="328" y="921" fill="#00ff00">Y</text>
        <text x="382" y="975" fill="#ff0000">X</text>
        <text x="328" y="975" fill="#0000ff">Z</text>
      </g>
    </svg>
  )
}

/* ---------- data ---------- */

const views = ['Roof', 'Floor 4', 'Floor 3', 'Floor 2', 'Floor 1', 'Ground floor']
const zones = [
  { name: 'Z01 - Offices - South', kind: 'heat', selected: true, spaces: ['Hall', 'Office 1', 'Meeting room', 'Office 3', 'Meeting room 2', 'Office 7', 'Office 10'] },
  { name: 'Z02 - Offices - North', kind: 'heat', spaces: ['Office 2', 'Office 4', 'Office 5', 'Office 6', 'Office 8', 'Office 9'] },
  { name: 'Z03 - Cafeteria', kind: 'heat', spaces: ['Dining room'] },
  { name: 'Z04 - Unconditioned', kind: 'yellow', spaces: ['WC gf', 'WC 1f', 'Corridor', 'WC 2f', 'Corridor 2', 'WC 3f', 'Corridor 3'] },
  { name: 'Z05 - Unoccupied', kind: 'grey', spaces: ['Lift', 'Risers', 'Lift', 'Risers', 'Lift', 'Risers'] },
]
const keySections = [
  { title: 'External vertical façade', rows: [['M1', 'Brick wall 17', '#ff0000'], ['C1', 'Brick wall 13', '#ff0000'], ['W2', 'Window 2', '#ff0000']] },
  { title: 'Internal partition walls between spaces of different zones', rows: [['T1', 'Simple partition', '#00ff00'], ['P1', 'Double door', '#00ff00'], ['T2', 'Isolated partition', '#ffff00'], ['P2', 'Internal door', '#00ff00']] },
  { title: 'Internal partition walls between spaces of the same zone', rows: [['T1', 'Simple partition', '#aaaaaa'], ['P2', 'Internal door', '#aaaaaa'], ['T2', 'Isolated partition', '#000000']] },
]
const labelButtons = [
  [69, <MoveTag mode="2D" />, 'Move tag', 'in 2D mode'],
  [68, <MoveTag mode="3D" />, 'Move tag', 'in 3D mode'],
  [86, <TagStart />, 'Move tag to', 'the initial point'],
  [64, <ShowTag />, 'Show/hide', 'tag'],
  [92, <PlaceTag />, 'Place or remove', 'the reference...'],
  [43, <RotateTag />, 'Rotate', 'tag'],
]
const tools = [
  ['Previous view', ZoomPrev], ['Zoom all', ZoomAll], ['Zoom x2', ZoomTwo], ['Redraw', Redraw],
  ['Zoom window', ZoomWindow], ['Pan', Hand], ['Orbit', Orbit], ['Send view', WindowPair], null,
  ['DXF-DWG templates', Dxf], ['Template snaps', () => <Dxf red />, true], ['Snap', Magnet], null,
  ['Frame', BoxTool, true], ['Grid', GridTool], ['Snap to grid', SnapTool], ['Keyboard entry', Keyboard],
  ['Dimensions', Dimension], ['Orthogonal', Angle], ['Polar', Polar], ['Selection', Select],
  ['Comments', Bubble], ['Settings', Tools2], null, ['Windows', Panes], null, ['Web', Globe], ['Help', Book],
]
const workTools = [
  ['Axes', Axes], ['View cube', Cube], ['Eye', EyeSpin], ['Turn', AxisSpin], null,
  ['Section X', () => <Half kind="red" />], ['Section Y', () => <Half kind="green" />],
  ['Section Z', () => <Half kind="blue" />], ['Layers', Layers], ['Hide', EyeOff], null, ['3D settings', Gear3d],
]

const ToolButtons = ({ items, gap }) =>
  items.map((t, i) => {
    if (!t) return <Divider key={i} $gap={gap} />
    const [name, Icon, active] = t
    return <IconButton key={i} aria-label={name} $active={active}><Icon /></IconButton>
  })

function PanelHeader({ title, collapse, close }) {
  return (
    <PanelHead>
      <PanelTitle>{title}</PanelTitle>
      {collapse && <HeadButton aria-label={`Collapse ${title}`}><Chevron /></HeadButton>}
      {close && <HeadButton aria-label={`Close ${title}`}><Cross /></HeadButton>}
    </PanelHead>
  )
}

const Splitter = ({ vertical }) => (
  <SplitBar $vertical={vertical}><Dot /><Dot /><Dot /><Dot /></SplitBar>
)

function Node({ label, icon, open, end, selected, guides = [] }) {
  return (
    <TreeRow>
      {guides.map((on, i) => <Guide key={i} $on={on} />)}
      <ExpandCell $end={end}>
        <Expander aria-label={`Toggle ${label}`}>
          <Svg s={7} stroke="#33507c"><path d={open ? 'M1 3.500H6' : 'M1 3.500H6M3.500 1V6'} /></Svg>
        </Expander>
      </ExpandCell>
      <Stub />
      {icon}
      <TreeLabel $selected={selected}>{label}</TreeLabel>
    </TreeRow>
  )
}

function ProjectTree() {
  return (
    <Tree>
      <Node label="Zones" icon={<House kind="none" />} open end />
      {zones.map((z, i) => {
        const lastZone = i === zones.length - 1
        return (
          <React.Fragment key={z.name}>
            <Node label={z.name} icon={<House kind={z.kind} />} open end={lastZone} selected={z.selected} guides={[false]} />
            {z.spaces.map((s, j) => (
              <Node key={j} label={`S0${j + 1} - ${s}`} icon={<Space />} end={j === z.spaces.length - 1} guides={[false, !lastZone]} />
            ))}
          </React.Fragment>
        )
      })}
    </Tree>
  )
}

function KeyRows({ section }) {
  return (
    <>
      <KeySection><th colSpan="3">{section.title}</th></KeySection>
      {section.rows.map(([ref, name, color]) => (
        <tr key={ref}>
          <td>{ref}</td>
          <td>{name}</td>
          <td>
            <Svg s={60} stroke={color} strokeWidth="2"><path d="M1.500 59L59 1.500" /></Svg>
          </td>
        </tr>
      ))}
    </>
  )
}

export default function App() {
  return (
    <Page>
      <GlobalStyle />
      <TopArea>
        <LogoBox><Logo /></LogoBox>
        <div>
          <TitleBar>
            <QuickAccess>
              <IconButton aria-label="Save"><Save /></IconButton>
              <IconButton aria-label="Undo"><Undo /></IconButton>
              <IconButton aria-label="Redo"><Undo flip /></IconButton>
              <IconButton aria-label="Search"><Search /></IconButton>
              <IconButton aria-label="Render"><Teapot /></IconButton>
              <Divider />
              <IconButton aria-label="Update"><Bim /></IconButton>
              <IconButton aria-label="More"><MoreArrow /></IconButton>
            </QuickAccess>
            <Title>CYPETHERM EPlus - Offices.tri</Title>
            <Account>
              <AccountLink href="#user" $w={138}><UserIcon />User BIMserver.center</AccountLink>
              <AccountLink href="#project" $w={84}><UserIcon cube />Project_001</AccountLink>
            </Account>
            <WindowButton aria-label="Minimize"><Svg s={12} stroke="#fff"><path d="M1 6.500H11" /></Svg></WindowButton>
            <WindowButton aria-label="Restore"><Svg s={12} stroke="#fff"><path d="M1.500 3.500H8.500V10.500H1.500ZM3.500 3V1.500H10.500V8.500H9" /></Svg></WindowButton>
            <WindowButton aria-label="Close"><Cross c="#fff" /></WindowButton>
          </TitleBar>
          <TabRow>
            <Tabs>
              <Tab $w={69}>Building</Tab>
              <Tab $w={67}>Analysis</Tab>
              <Tab $w={73} $active>Drawings</Tab>
            </Tabs>
            <Tools>
              <Divider $gap={2} />
              <ToolButtons items={tools} gap={2} />
            </Tools>
          </TabRow>
        </div>
      </TopArea>

      <Ribbon>
        <Group>
          <GroupButtons>
            <BigButton $w={54}><Wand />Generate</BigButton>
            <BigButton $w={50}><Gear />Options</BigButton>
          </GroupButtons>
          <GroupName>Representation</GroupName>
        </Group>
        <Group>
          <GroupButtons>
            {labelButtons.map(([w, icon, a, b], i) => (
              <BigButton key={i} $w={w}>{icon}<span>{a}<br />{b}</span></BigButton>
            ))}
          </GroupButtons>
          <GroupName>Label</GroupName>
        </Group>
        <Group>
          <GroupButtons><BigButton $w={68} aria-label="Annotations"><PenCup /></BigButton></GroupButtons>
          <GroupName>Annotations</GroupName>
        </Group>
        <Group $last>
          <GroupButtons><BigButton $w={88}><Bim s={32} dark="#333" />Update</BigButton></GroupButtons>
          <GroupName>BIMserver.center</GroupName>
        </Group>
      </Ribbon>

      <Main>
        <LeftColumn>
          <PanelHeader title="Views" collapse close />
          <ViewList>
            <ViewRow $group $tint><Chevron c="#444" />Plan views</ViewRow>
            {views.map(v => <ViewRow key={v} $selected={v === 'Floor 1'}>{v}</ViewRow>)}
            <ViewRow $group><Chevron c="#444" />3D views</ViewRow>
            <ViewRow>3D</ViewRow>
          </ViewList>
          <Splitter />
          <PanelHeader title="Project" collapse close />
          <ProjectBody>
            <ProjectTools>
              <IconButton aria-label="Add"><Plus /></IconButton>
              <IconButton aria-label="Copy"><Copies /></IconButton>
              <IconButton aria-label="Delete"><Remove /></IconButton>
              <IconButton aria-label="Find"><Search c="#333" /></IconButton>
              <Divider $gap={2} />
              <IconButton aria-label="Expand all"><TreeTool plus /></IconButton>
              <IconButton aria-label="Collapse all"><TreeTool /></IconButton>
            </ProjectTools>
            <TreeArea>
              <ProjectTree />
              <Scrollbar>
                <ScrollButton aria-label="Scroll up" $tall><Chevron c="#444" up /></ScrollButton>
                <ScrollThumb />
                <ScrollButton aria-label="Scroll down"><Chevron c="#444" /></ScrollButton>
              </Scrollbar>
            </TreeArea>
          </ProjectBody>
        </LeftColumn>
        <Splitter vertical />
        <WorkArea>
          <PanelHeader title="Work area" />
          <WorkTools><ToolButtons items={workTools} gap={2} /></WorkTools>
          <Canvas><FloorPlan /></Canvas>
        </WorkArea>
        <Splitter vertical />
        <KeyPanel>
          <PanelHeader title="Key" close />
          <KeyBody>
            <KeyTable>
              <colgroup>
                <col width="101" />
                <col width="142" />
                <col />
              </colgroup>
              <thead>
                <tr><th>Reference</th><th>Overview</th><th>Details</th></tr>
              </thead>
              <tbody>
                {keySections.map(s => <KeyRows key={s.title} section={s} />)}
              </tbody>
            </KeyTable>
          </KeyBody>
        </KeyPanel>
      </Main>

      <StatusBar>
        <Info />
        <span>Element selection tool&nbsp; ●&nbsp; Select an element.</span>
        <StatusMark />
      </StatusBar>
    </Page>
  )
}
